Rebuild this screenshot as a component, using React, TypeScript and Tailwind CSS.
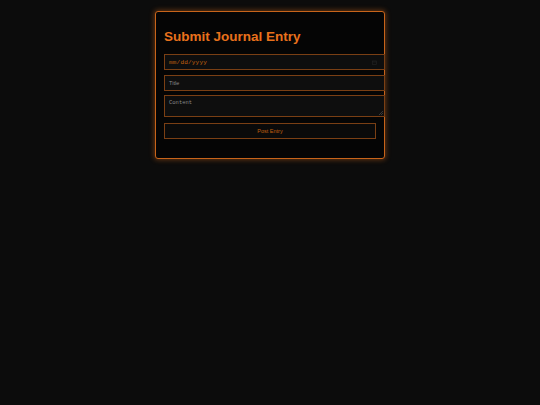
import React from "react";

export default function App() {
  return (
    <div className="min-h-[405px] w-full bg-[#0c0c0c] flex justify-center pt-[11px]" style={{ fontFamily: '"Liberation Sans", Arial, sans-serif' }}>
      <div className="w-[230px] h-[148px] bg-[#050505] border-[1.5px] border-[#c8641a] rounded-[3px] shadow-[0_0_5px_1px_rgba(200,100,26,0.45)] px-[8px] pt-[17px]">
        <h2 className="text-[13.5px] leading-[16px] font-bold text-[#e8711c] m-0">Submit Journal Entry</h2>
        <div className="mt-[9px] flex flex-col">
          <div className="w-[221px] h-[16px] border border-[#7a3f14] bg-[#0e0e0e] flex items-center justify-between px-[4px]">
            <span className="text-[6px] text-[#c0600f] tracking-[0.2px]" style={{ fontFamily: '"Liberation Mono", "DejaVu Sans Mono", monospace' }}>mm/dd/yyyy</span>
            <svg width="5" height="5" viewBox="0 0 10 10" className="mr-[3px]">
              <rect x="1" y="2" width="8" height="7" fill="none" stroke="#262626" strokeWidth="1.2" />
              <line x1="1" y1="4" x2="9" y2="4" stroke="#262626" strokeWidth="1" />
            </svg>
          </div>
          <div className="mt-[5px] w-[221px] h-[16px] border border-[#7a3f14] bg-[#0e0e0e] flex items-center px-[4px]">
            <span className="text-[5.5px] text-[#8a8a8a]">Title</span>
          </div>
          <div className="relative mt-[4px] w-[221px] h-[22px] border border-[#7a3f14] bg-[#0e0e0e] px-[4px] pt-[3px]">
            <span className="block text-[5.5px] leading-[7px] text-[#8a8a8a]" style={{ fontFamily: '"Liberation Mono", "DejaVu Sans Mono", monospace' }}>Content</span>
            <svg width="4" height="4" viewBox="0 0 4 4" className="absolute right-[1px] bottom-[1px]">
              <line x1="0" y1="4" x2="4" y2="0" stroke="#555" strokeWidth="0.6" />
              <line x1="2" y1="4" x2="4" y2="2" stroke="#555" strokeWidth="0.6" />
            </svg>
          </div>
          <button className="mt-[6px] w-[212px] h-[16px] border border-[#7a3f14] bg-[#0a0a0a] text-[5.5px] text-[#c0600f] flex items-center justify-center">
            Post Entry
          </button>
        </div>
      </div>
    </div>
  );
}
